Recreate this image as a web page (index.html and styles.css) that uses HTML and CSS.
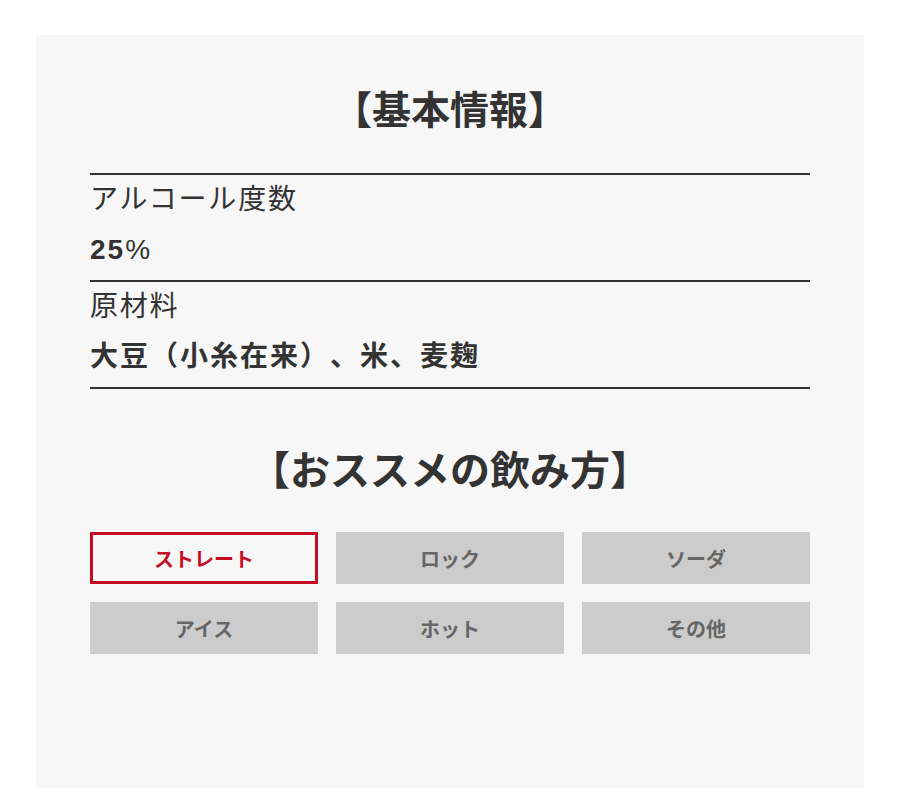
FILE: index.html
```html
<!DOCTYPE html>
<html lang="ja">
<head>
<meta charset="utf-8">
<link rel="stylesheet" href="styles.css">
</head>
<body>
<div class="panel">
  <h2 class="title">【基本情報】</h2>
  <dl class="specs">
    <div class="row">
      <dt class="label">アルコール度数</dt>
      <dd class="value">25<span class="unit">%</span></dd>
    </div>
    <div class="row">
      <dt class="label">原材料</dt>
      <dd class="value">大豆（小糸在来）、米、麦麹</dd>
    </div>
  </dl>
  <h2 class="title title-2">【おススメの飲み方】</h2>
  <div class="tabs">
    <button class="tab active">ストレート</button>
    <button class="tab">ロック</button>
    <button class="tab">ソーダ</button>
    <button class="tab">アイス</button>
    <button class="tab">ホット</button>
    <button class="tab">その他</button>
  </div>
</div>
</body>
</html>
```
FILE: styles.css
```css
html, body {
  margin: 0;
  padding: 0;
  background: #fff;
}
body {
  font-family: "Liberation Sans", "Noto Sans CJK JP", sans-serif;
  color: #333;
  padding: 35px 36px 20px;
  text-spacing-trim: space-all;
}
.panel {
  background: #f7f7f7;
  height: 753px;
  box-sizing: border-box;
  padding: 48px 54px 0;
}
.title {
  margin: 0;
  text-align: center;
  font-size: 39px;
  line-height: 56px;
  font-weight: 700;
}
.title-2 {
  font-size: 40px;
  line-height: 60px;
  margin-top: 52px;
}
.specs {
  margin: 34px 0 0;
  border-bottom: 2px solid #333;
}
.row {
  border-top: 2px solid #333;
  padding: 4px 0 9px;
}
.label {
  font-size: 28px;
  line-height: 42px;
  letter-spacing: 1.8px;
  font-weight: 400;
}
.value {
  margin: 8px 0 0;
  font-size: 28px;
  line-height: 42px;
  letter-spacing: 2px;
  font-weight: 700;
}
.unit {
  font-weight: 400;
}
.tabs {
  margin-top: 31px;
  display: grid;
  grid-template-columns: repeat(3, 1fr);
  gap: 18px;
}
.tab {
  height: 52px;
  border: 0;
  background: #cccccc;
  color: #666;
  font-family: inherit;
  font-size: 20px;
  font-weight: 700;
  padding: 0;
}
.tab.active {
  background: #f7f7f7;
  border: 3px solid #c30d23;
  color: #c30d23;
}
```
